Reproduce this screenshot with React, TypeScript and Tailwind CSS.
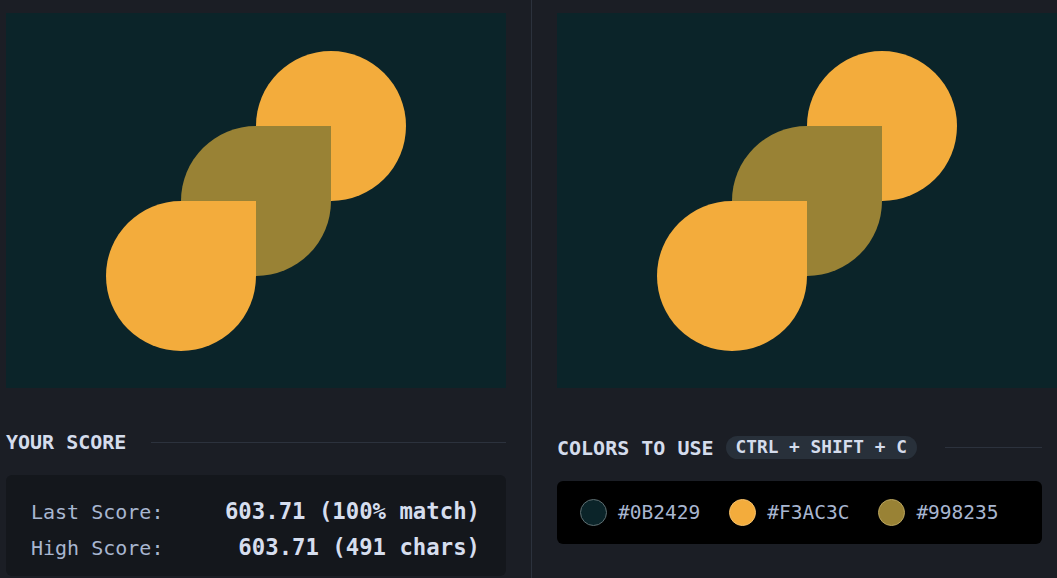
import React from "react";

const mono = { fontFamily: '"DejaVu Sans Mono", "Liberation Mono", monospace' };

function Canvas() {
  return (
    <div className="relative w-[500px] h-[375px] bg-[#0B2429] overflow-hidden shrink-0">
      <div className="absolute left-[250px] top-[38px] w-[150px] h-[150px] rounded-full bg-[#F3AC3C]" />
      <div className="absolute left-[175px] top-[113px] w-[150px] h-[150px] rounded-[75px_0_75px_75px] bg-[#998235]" />
      <div className="absolute left-[100px] top-[188px] w-[150px] h-[150px] rounded-[75px_0_75px_75px] bg-[#F3AC3C]" />
    </div>
  );
}

function Swatch({ color, label, border }: { color: string; label: string; border: string }) {
  return (
    <div className="flex items-center gap-[11px]">
      <span
        className={`w-[27px] h-[27px] rounded-full border ${border}`}
        style={{ backgroundColor: color }}
      />
      <span className="text-[19.5px] text-[#a8b6d0]">{label}</span>
    </div>
  );
}

export default function App() {
  return (
    <div className="w-[1057px] h-[578px] overflow-hidden bg-[#1b1e25] flex" style={mono}>
      <div className="w-[532px] shrink-0 border-r border-[#2c323d] pl-[6px] pt-[13px] flex flex-col">
        <Canvas />
        <div className="mt-[40px] flex items-center h-[28px] w-[500px]">
          <span className="text-[20px] font-bold text-[#d4dcec]">YOUR SCORE</span>
          <div className="flex-1 h-px bg-[#2c323d] ml-[25px]" />
        </div>
        <div className="mt-[19px] w-[500px] rounded-[6px] bg-[#14171c] pt-[19px] pb-[10px] pl-[25px] pr-[26px]">
          <div className="flex items-center justify-between h-[36px]">
            <span className="text-[20px] text-[#a8b6d0]">Last Score:</span>
            <span className="text-[22.3px] font-bold text-[#d6deee]">603.71 (100% match)</span>
          </div>
          <div className="flex items-center justify-between h-[36px]">
            <span className="text-[20px] text-[#a8b6d0]">High Score:</span>
            <span className="text-[22.3px] font-bold text-[#d6deee]">603.71 (491 chars)</span>
          </div>
        </div>
      </div>
      <div className="flex-1 pl-[25px] pt-[13px] flex flex-col">
        <Canvas />
        <div className="mt-[48px] flex items-center h-[23px] w-[485px]">
          <span className="text-[20px] font-bold text-[#d4dcec]">COLORS TO USE</span>
          <span className="ml-[12px] h-[23px] px-[10px] rounded-full bg-[#28303a] text-[17.8px] font-bold text-[#d4dcec] flex items-center">
            CTRL + SHIFT + C
          </span>
          <div className="flex-1 h-px bg-[#2c323d] ml-[28px]" />
        </div>
        <div className="mt-[22px] w-[485px] h-[63px] rounded-[6px] bg-black flex items-center pl-[23px] gap-[29px]">
          <Swatch color="#0B2429" label="#0B2429" border="border-[#5f6f72]" />
          <Swatch color="#F3AC3C" label="#F3AC3C" border="border-[#f6c06a]" />
          <Swatch color="#998235" label="#998235" border="border-[#b9a45e]" />
        </div>
      </div>
    </div>
  );
}
